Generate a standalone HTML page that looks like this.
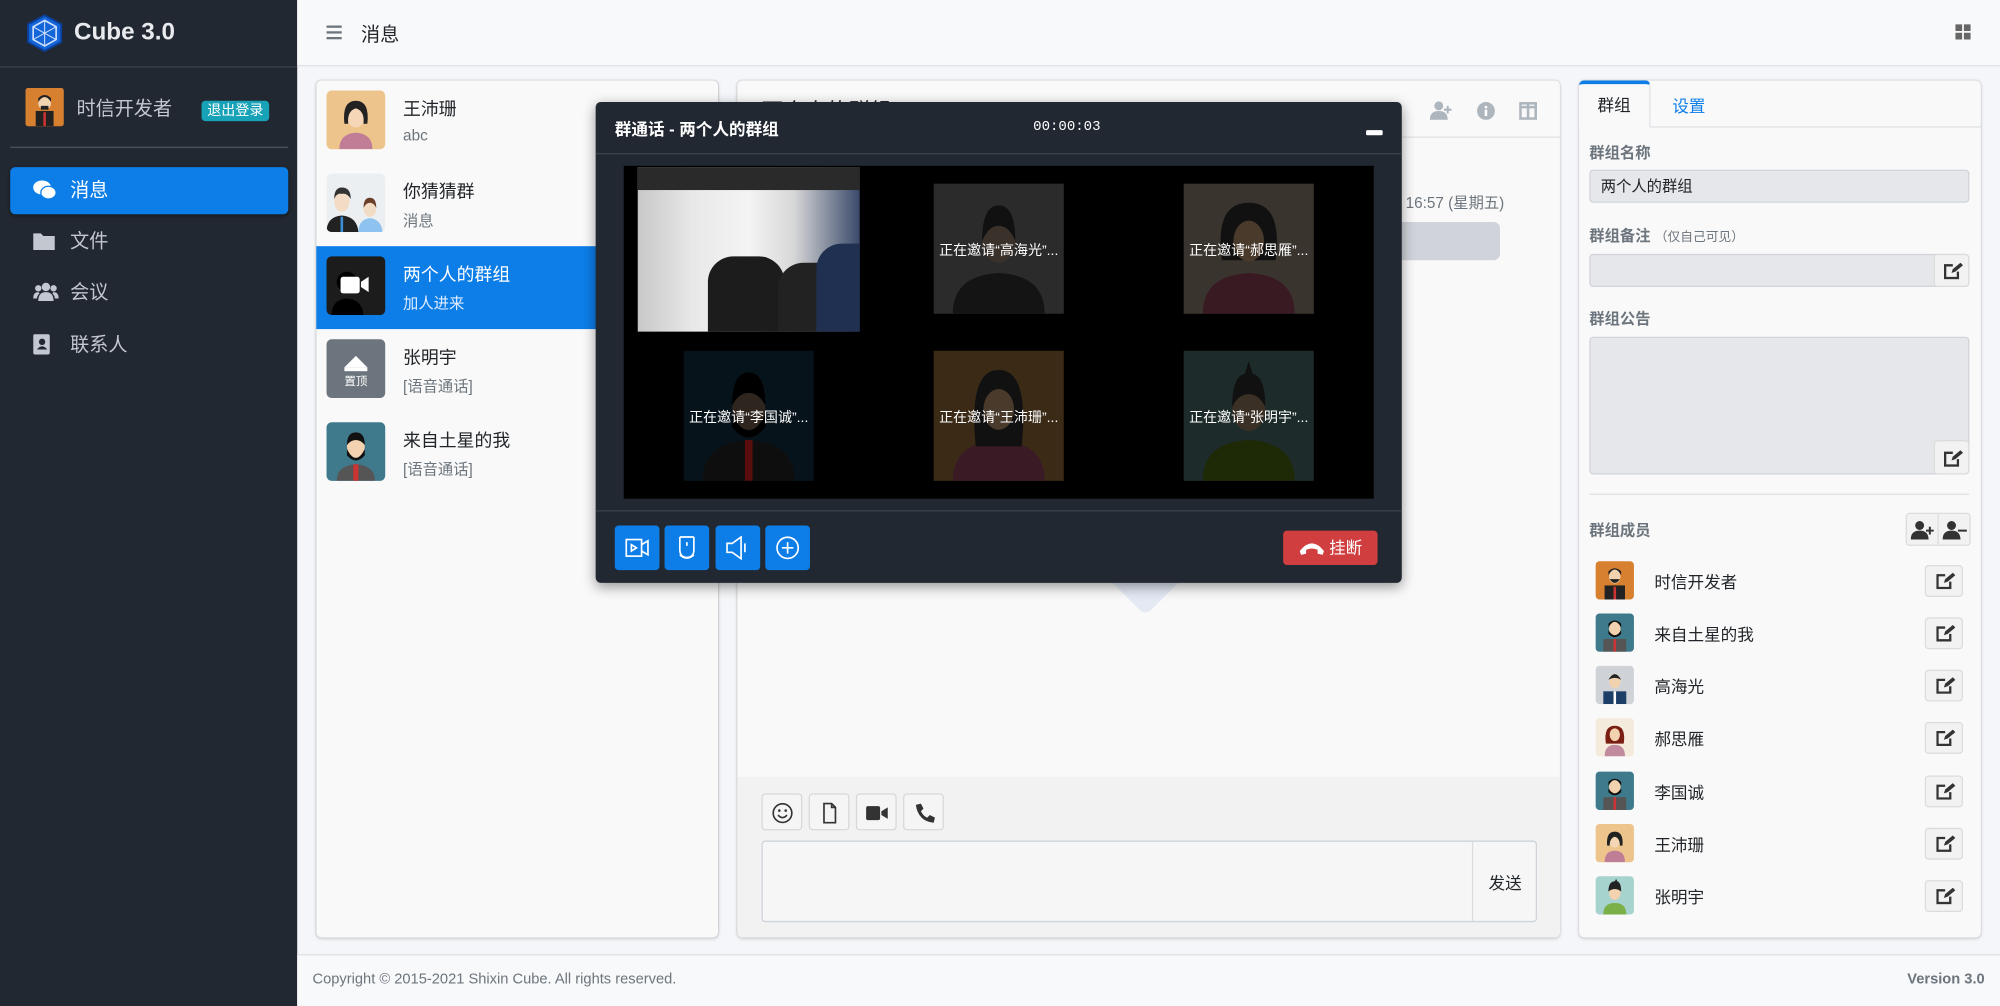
<!DOCTYPE html>
<html><head><meta charset="utf-8"><style>
*{box-sizing:border-box;margin:0;padding:0}
html,body{width:2000px;height:1006px;overflow:hidden;background:#f8f9fa}
body{font-family:"Liberation Sans","Noto Sans CJK SC",sans-serif;color:#212529}
#w{position:absolute;left:0;top:0;width:1568px;height:789px;transform:scale(1.27551);transform-origin:0 0;background:#f4f6f9}
.a{position:absolute}
.sb{left:0;top:0;width:233px;height:789px;background:#222831}
.nav{position:absolute;left:8px;width:218px;height:37px;border-radius:4px;color:#c2c7d0;font-size:15px;line-height:37px;padding-left:47px}
.nav.on{background:#0d7ee8;color:#fff;box-shadow:0 1px 3px rgba(0,0,0,.4)}
.nav svg{position:absolute;left:18px;top:10px}
.card{background:#f9f9f9;border-radius:4px;box-shadow:0 0 1px rgba(0,0,0,.2),0 1px 3px rgba(0,0,0,.15)}
.it{position:absolute;left:0;width:315px;height:65px}
.it .av{position:absolute;left:8px;top:8px;width:46px;height:46px;border-radius:4px;overflow:hidden}
.it .n{position:absolute;left:68px;top:12px;font-size:14px}
.it .s{position:absolute;left:68px;top:36px;font-size:12px;color:#6c757d}
.lbl{position:absolute;left:8px;font-size:12px;font-weight:bold;color:#6c757d}
.inp{position:absolute;left:8px;width:298px;background:#e5e7ea;border:1px solid #d0d4d9;border-radius:3px}
.eb{position:absolute;width:29px;height:26px;background:#f2f2f2;border:1px solid #dcdcdc;border-radius:3px}
.mem{position:absolute;left:13px;width:290px;height:30px}
.mem .av{position:absolute;left:0;top:0;width:30px;height:30px;border-radius:3px;overflow:hidden}
.mem .n{position:absolute;left:46px;top:6px;font-size:13px}
.mem .eb{left:258px;top:3px;width:30px;height:25px}
.mem .eb svg{position:absolute;left:8px;top:5px}
.tile{position:absolute;width:102px;height:102px;overflow:hidden}
.tile span{position:absolute;left:0;right:0;top:44px;text-align:center;color:#fff;font-size:11px;white-space:nowrap}
.mb{position:absolute;top:332px;width:35px;height:35px;background:#0d7ee8;border-radius:3px}
.mb svg{position:absolute;left:8px;top:8px}
.tb{position:absolute;top:13px;width:32px;height:29px;background:#f5f5f5;border:1px solid #d8d8d8;border-radius:3px}
.tb svg{position:absolute;left:7px;top:6px}
</style></head><body><div id="w">

<svg width="0" height="0" style="position:absolute"><defs><g id="ed"><path d="M7 2 H1 V12 H11 V7" fill="none" stroke="#333" stroke-width="1.8"/><path d="M6 8 l1-3 l6-5 l2 2 l-6 5z" fill="#333"/></g></defs></svg>

<!-- sidebar -->
<div class="a sb">
 <svg class="a" style="left:21px;top:11px" width="28" height="30" viewBox="0 0 28 30"><polygon points="14,1 27,8 27,22 14,29 1,22 1,8" fill="#1466d8" stroke="#0b3f99" stroke-width="1.5"/><polygon points="14,5 23,10 23,20 14,25 5,20 5,10" fill="none" stroke="#cfe0ff" stroke-width="1.3"/><path d="M14 5 L14 25 M5 10 L23 20 M23 10 L5 20" stroke="#cfe0ff" stroke-width="0.8"/></svg>
 <div class="a" style="left:58px;top:15px;font-size:19px;font-weight:bold;color:#e8eaed">Cube 3.0</div>
 <div class="a" style="left:0;top:52px;width:233px;height:1px;background:#3a4047"></div>
 <div class="a" style="left:20px;top:69px;width:30px;height:30px;background:#d7802f;border-radius:2px;overflow:hidden"><svg width="30" height="30"><rect x="8" y="18" width="14" height="12" fill="#222"/><rect x="14" y="19" width="2" height="11" fill="#c33"/><circle cx="15" cy="12" r="5" fill="#f3d2b0"/><path d="M10 11 q5 -8 10 0 v-3 q-5 -5 -10 0z" fill="#222"/><rect x="12" y="14" width="6" height="3" fill="#222"/></svg></div>
 <div class="a" style="left:60px;top:74px;font-size:15px;color:#c2c7d0">时信开发者</div>
 <div class="a" style="left:158px;top:79px;width:53px;height:16px;background:#17a2b8;border-radius:3px;color:#fff;font-size:11px;line-height:16px;text-align:center">退出登录</div>
 <div class="a" style="left:8px;top:115px;width:218px;height:1px;background:#4b545c"></div>
 <div class="nav on" style="top:131px"><svg width="18" height="16" viewBox="0 0 18 16"><ellipse cx="7" cy="6" rx="7" ry="5.5" fill="#fff"/><ellipse cx="12" cy="10" rx="6" ry="5" fill="#fff" stroke="#0d7ee8" stroke-width="1"/></svg>消息</div>
 <div class="nav" style="top:171px"><svg width="17" height="15" viewBox="0 0 17 15"><path d="M0 2 h6 l2 2 h9 v11 h-17z" fill="#c2c7d0"/></svg>文件</div>
 <div class="nav" style="top:211px"><svg width="20" height="15" viewBox="0 0 20 15"><circle cx="10" cy="4" r="3.3" fill="#c2c7d0"/><circle cx="4" cy="5" r="2.5" fill="#c2c7d0"/><circle cx="16" cy="5" r="2.5" fill="#c2c7d0"/><path d="M4 15 q0-7 6-7 q6 0 6 7z M0 13 q0-5 4-5 l1 1 q-2 2-2 4z M20 13 q0-5-4-5 l-1 1 q2 2 2 4z" fill="#c2c7d0"/></svg>会议</div>
 <div class="nav" style="top:252px"><svg width="14" height="16" viewBox="0 0 14 16"><rect x="0" y="0" width="13" height="16" rx="1.5" fill="#c2c7d0"/><circle cx="7" cy="6" r="2.5" fill="#222831"/><path d="M3 12 q4-5 8 0z" fill="#222831"/></svg>联系人</div>
</div>

<!-- top bar -->
<div class="a" style="left:233px;top:0;width:1335px;height:52px;background:#f8f9fa;border-bottom:1px solid #dee2e6"></div>
<svg class="a" style="left:256px;top:20px" width="12" height="11"><rect y="0" width="12" height="1.8" fill="#6c757d"/><rect y="4.5" width="12" height="1.8" fill="#6c757d"/><rect y="9" width="12" height="1.8" fill="#6c757d"/></svg>
<div class="a" style="left:283px;top:16px;font-size:15px">消息</div>
<svg class="a" style="left:1533px;top:19px" width="12" height="12"><rect width="5.3" height="5.3" fill="#666"/><rect x="6.7" width="5.3" height="5.3" fill="#666"/><rect y="6.7" width="5.3" height="5.3" fill="#666"/><rect x="6.7" y="6.7" width="5.3" height="5.3" fill="#666"/></svg>

<!-- footer -->
<div class="a" style="left:233px;top:748px;width:1335px;height:41px;background:#f8f9fa;border-top:1px solid #dee2e6"></div>
<div class="a" style="left:245px;top:762px;font-size:11.5px;color:#6c757d">Copyright © 2015-2021 Shixin Cube. All rights reserved.</div>
<div class="a" style="left:1470px;top:762px;width:86px;text-align:right;font-size:11.5px;font-weight:bold;color:#6c757d">Version 3.0</div>

<!-- conversation list -->
<div class="a card" style="left:248px;top:63px;width:315px;height:672px">
 <div class="it" style="top:0"><div class="av" style="background:#eec48d"><svg width="46" height="46"><path d="M10 46 q0-12 13-13 q13 1 13 13z" fill="#c07d96"/><ellipse cx="23" cy="20" rx="7" ry="9" fill="#f5d6b6"/><path d="M14 26 q-2-18 9-18 q11 0 9 18 l-3 0 q1-10-6-12 q-7 2-6 12z" fill="#222"/></svg></div><div class="n">王沛珊</div><div class="s">abc</div></div>
 <div class="it" style="top:65px"><div class="av" style="background:#eceff2"><svg width="46" height="46"><path d="M0 46 q0-12 12-13 q12 1 13 13z" fill="#222"/><rect x="11" y="34" width="2" height="12" fill="#3a8fd8"/><ellipse cx="12" cy="22" rx="6" ry="8" fill="#f3dcc6"/><path d="M6 20 q0-9 6-9 q7 0 7 9 q-3-5-7-4 q-4-1-6 4z" fill="#333"/><path d="M25 46 q0-10 9-11 q9 1 10 11z" fill="#8ec3ef"/><ellipse cx="34" cy="28" rx="5" ry="6" fill="#f3dcc6"/><path d="M29 27 q0-8 5-8 q5 0 5 8 q-2-4-5-4 q-3 0-5 4z" fill="#6b3f2a"/></svg></div><div class="n">你猜猜群</div><div class="s">消息</div></div>
 <div class="it" style="top:130px;background:#0d7ee8"><div class="av" style="background:#1c1c1c"><svg width="46" height="46"><path d="M4 46 q0-12 12-13 q12 1 13 13z" fill="#000"/><circle cx="16" cy="20" r="8" fill="#000"/><rect x="11" y="16" width="15" height="13" rx="2" fill="#fff"/><path d="M27 20 l6-4 v12 l-6-4z" fill="#fff"/></svg></div><div class="n" style="color:#fff">两个人的群组</div><div class="s" style="color:#e0ecff">加人进来</div></div>
 <div class="it" style="top:195px"><div class="av" style="background:#6c757d"><svg width="46" height="46"><path d="M23 13 l9 9 h-18z" fill="#fff"/><rect x="14" y="22" width="18" height="3" fill="#fff"/><text x="23" y="36" font-size="9" fill="#fff" text-anchor="middle" font-family="Noto Sans CJK SC">置顶</text></svg></div><div class="n">张明宇</div><div class="s">[语音通话]</div></div>
 <div class="it" style="top:260px"><div class="av" style="background:#3f7a8c"><svg width="46" height="46"><path d="M8 46 q0-12 15-13 q15 1 15 13z" fill="#555"/><rect x="21" y="33" width="4" height="13" fill="#c33"/><ellipse cx="23" cy="19" rx="7" ry="9" fill="#f3d2b0"/><path d="M16 18 q0-10 7-10 q7 0 7 10 q-3-4-7-4 q-4 0-7 4z M16 21 q7 14 14 0 v5 q-7 8-14 0z" fill="#111"/></svg></div><div class="n">来自土星的我</div><div class="s">[语音通话]</div></div>
</div>

<!-- chat panel -->
<div class="a card" style="left:578px;top:63px;width:645px;height:672px;overflow:hidden">
 <div class="a" style="left:19px;top:10px;font-size:17px">两个人的群组</div>
 <div class="a" style="left:0;top:44px;width:645px;height:1px;background:#dee2e6"></div>
 <svg class="a" style="left:543px;top:16px" width="18" height="15"><circle cx="7" cy="4" r="3.5" fill="#adb5bd"/><path d="M0 15 q0-7 7-7 q7 0 7 7z" fill="#adb5bd"/><path d="M14 4 v6 M11 7 h6" stroke="#adb5bd" stroke-width="1.6"/></svg>
 <svg class="a" style="left:580px;top:17px" width="14" height="14"><circle cx="7" cy="7" r="7" fill="#adb5bd"/><rect x="6" y="6" width="2" height="5" fill="#fff"/><circle cx="7" cy="4" r="1.1" fill="#fff"/></svg>
 <svg class="a" style="left:613px;top:17px" width="14" height="14"><rect x="1" y="1" width="12" height="12" fill="none" stroke="#adb5bd" stroke-width="2"/><path d="M7 1 v12 M1 4 h12" stroke="#adb5bd" stroke-width="2"/></svg>
 <div class="a" style="left:524px;top:87px;font-size:12px;color:#6c757d">16:57 (星期五)</div>
 <div class="a" style="left:440px;top:111px;width:158px;height:30px;background:#d0d4da;border-radius:5px"></div>
 <div class="a" style="left:270px;top:299px;width:100px;height:100px;background:#e4e9f4;transform:rotate(45deg);border-radius:6px"></div>
 <div class="a" style="left:0;top:546px;width:645px;height:126px;background:#f2f2f2"></div>
 <div class="tb" style="left:19px;top:559px"><svg width="17" height="17"><circle cx="8.5" cy="8.5" r="7.3" fill="none" stroke="#333" stroke-width="1.3"/><circle cx="6" cy="6.5" r="1" fill="#333"/><circle cx="11" cy="6.5" r="1" fill="#333"/><path d="M5 10 q3.5 4 7 0" fill="none" stroke="#333" stroke-width="1.3"/></svg></div>
 <div class="tb" style="left:56px;top:559px"><svg width="17" height="17"><path d="M4 1 h6 l3 3 v12 h-9z M10 1 v3 h3" fill="none" stroke="#333" stroke-width="1.3"/></svg></div>
 <div class="tb" style="left:93px;top:559px"><svg width="18" height="17"><rect x="0" y="3" width="11" height="11" rx="1.5" fill="#333"/><path d="M12 7 l5-3 v9 l-5-3z" fill="#333"/></svg></div>
 <div class="tb" style="left:130px;top:559px"><svg width="17" height="17"><path d="M2 2 l4-1 l2 4 l-2 2 q2 4 5 5 l2-2 l4 2 l-1 4 q-12-1-14-14z" fill="#333"/></svg></div>
 <div class="a" style="left:19px;top:596px;width:608px;height:64px;background:#f6f6f6;border:1px solid #ced4da;border-radius:3px"></div>
 <div class="a" style="left:576px;top:597px;width:1px;height:62px;background:#dcdcdc"></div>
 <div class="a" style="left:589px;top:619px;font-size:13px">发送</div>
</div>

<!-- right panel -->
<div class="a card" style="left:1238px;top:63px;width:315px;height:672px">
 <div class="a" style="left:0;top:36px;width:315px;height:1px;background:#dee2e6"></div>
 <div class="a" style="left:0;top:0;width:56px;height:37px;background:#f9f9f9;border-top:3px solid #0d7ee8;border-right:1px solid #dee2e6;border-radius:4px 4px 0 0;font-size:13px;text-align:center;line-height:33px">群组</div>
 <div class="a" style="left:73px;top:10px;font-size:13px;color:#0d7ee8">设置</div>
 <div class="lbl" style="top:48px">群组名称</div>
 <div class="inp" style="top:70px;height:26px;font-size:12px;line-height:24px;padding-left:8px">两个人的群组</div>
 <div class="lbl" style="top:113px">群组备注 <span style="font-size:10px;font-weight:normal">（仅自己可见）</span></div>
 <div class="inp" style="top:136px;height:26px"></div>
 <div class="eb" style="left:278px;top:136px;height:26px;width:28px"><svg class="a" style="left:7px;top:6px" width="15" height="13"><use href="#ed"/></svg></div>
 <div class="lbl" style="top:178px">群组公告</div>
 <div class="inp" style="top:201px;height:108px"></div>
 <div class="eb" style="left:278px;top:282px;height:27px;width:28px"><svg class="a" style="left:7px;top:7px" width="15" height="13"><use href="#ed"/></svg></div>
 <div class="a" style="left:8px;top:324px;width:298px;height:1px;background:#dee2e6"></div>
 <div class="lbl" style="top:344px">群组成员</div>
 <div class="eb" style="left:256px;top:339px;width:51px;height:26px"><div class="a" style="left:24px;top:0;width:1px;height:24px;background:#dcdcdc"></div>
  <svg class="a" style="left:3px;top:5px" width="20" height="15"><circle cx="7" cy="4" r="3.5" fill="#333"/><path d="M0 15 q0-7 7-7 q7 0 7 7z" fill="#333"/><path d="M15 5 v6 M12 8 h6" stroke="#333" stroke-width="1.6"/></svg>
  <svg class="a" style="left:28px;top:5px" width="20" height="15"><circle cx="7" cy="4" r="3.5" fill="#333"/><path d="M0 15 q0-7 7-7 q7 0 7 7z" fill="#333"/><path d="M12 8 h7" stroke="#333" stroke-width="1.6"/></svg></div>

 <div class="mem" style="top:377px"><div class="av" style="background:#d7802f"><svg width="30" height="30"><rect x="7" y="19" width="16" height="11" fill="#222"/><rect x="14" y="20" width="2" height="10" fill="#c33"/><ellipse cx="15" cy="12" rx="4.5" ry="5.5" fill="#f3d2b0"/><path d="M10 11 q5-9 10 0 v-3 q-5-5-10 0z M11 14 q4 6 8 0z" fill="#222"/></svg></div><div class="n">时信开发者</div><div class="eb"><svg width="15" height="13"><use href="#ed"/></svg></div></div>
 <div class="mem" style="top:418px"><div class="av" style="background:#3f7a8c"><svg width="30" height="30"><rect x="6" y="20" width="18" height="10" fill="#555"/><rect x="14" y="20" width="2" height="10" fill="#c33"/><ellipse cx="15" cy="12" rx="4.5" ry="5.5" fill="#f3d2b0"/><path d="M10 11 q5-9 10 0 v-3 q-5-5-10 0z M10 13 q5 8 10 0 v3 q-5 5-10 0z" fill="#111"/></svg></div><div class="n">来自土星的我</div><div class="eb"><svg width="15" height="13"><use href="#ed"/></svg></div></div>
 <div class="mem" style="top:459px"><div class="av" style="background:#cfd3d8"><svg width="30" height="30"><rect x="6" y="20" width="18" height="10" fill="#1d3e66"/><rect x="14" y="20" width="2" height="10" fill="#fff"/><ellipse cx="15" cy="12" rx="4.5" ry="5.5" fill="#f3d2b0"/><path d="M10 11 q5-9 10 0 q-5-3-10 0z" fill="#222"/></svg></div><div class="n">高海光</div><div class="eb"><svg width="15" height="13"><use href="#ed"/></svg></div></div>
 <div class="mem" style="top:500px"><div class="av" style="background:#f4ebdd"><svg width="30" height="30"><path d="M7 30 q0-9 8-9 q8 0 8 9z" fill="#c28a9e"/><path d="M8 20 q-2-14 7-14 q9 0 7 14z" fill="#7a1d12"/><ellipse cx="15" cy="13" rx="4" ry="5" fill="#f3d2b0"/></svg></div><div class="n">郝思雁</div><div class="eb"><svg width="15" height="13"><use href="#ed"/></svg></div></div>
 <div class="mem" style="top:542px"><div class="av" style="background:#3f7a8c"><svg width="30" height="30"><rect x="6" y="20" width="18" height="10" fill="#555"/><rect x="14" y="20" width="2" height="10" fill="#c33"/><ellipse cx="15" cy="12" rx="4.5" ry="5.5" fill="#f3d2b0"/><path d="M10 11 q5-9 10 0 v-3 q-5-5-10 0z M10 13 q5 8 10 0 v3 q-5 5-10 0z" fill="#111"/></svg></div><div class="n">李国诚</div><div class="eb"><svg width="15" height="13"><use href="#ed"/></svg></div></div>
 <div class="mem" style="top:583px"><div class="av" style="background:#eec48d"><svg width="30" height="30"><path d="M7 30 q0-9 8-9 q8 0 8 9z" fill="#c07d96"/><ellipse cx="15" cy="13" rx="4.5" ry="5.5" fill="#f5d6b6"/><path d="M9 17 q-1-11 6-11 q7 0 6 11 l-2 0 q0-6-4-7 q-4 1-4 7z" fill="#222"/></svg></div><div class="n">王沛珊</div><div class="eb"><svg width="15" height="13"><use href="#ed"/></svg></div></div>
 <div class="mem" style="top:624px"><div class="av" style="background:#a7d3cf"><svg width="30" height="30"><path d="M6 30 q0-9 9-9 q9 0 9 9z" fill="#7bb048"/><ellipse cx="15" cy="13" rx="4.5" ry="5.5" fill="#f3d2b0"/><path d="M10 12 q0-8 5-8 l1-2 l1 2 q3 1 3 8 q-5-4-10 0z" fill="#222"/></svg></div><div class="n">张明宇</div><div class="eb"><svg width="15" height="13"><use href="#ed"/></svg></div></div>
</div>

<!-- call modal -->
<div class="a" style="left:467px;top:80px;width:632px;height:377px;background:#222831;border-radius:4px;box-shadow:0 3px 10px rgba(0,0,0,.4)">
 <div class="a" style="left:15px;top:11px;font-size:13px;font-weight:bold;color:#fff">群通话 - 两个人的群组</div>
 <div class="a" style="left:343px;top:14px;font-size:11px;color:#fff;font-family:'Liberation Mono','DejaVu Sans Mono',monospace">00:00:03</div>
 <div class="a" style="left:604px;top:22px;width:13px;height:4px;background:#fff;border-radius:1px"></div>
 <div class="a" style="left:0;top:40px;width:632px;height:1px;background:#3b424b"></div>
 <div class="a" style="left:22px;top:50px;width:588px;height:261px;background:#000">
  <div class="a" style="left:11px;top:1px;width:174px;height:129px;background:linear-gradient(90deg,#c8c8c8 0%,#e8e8e8 25%,#f4f4f4 50%,#d8d8d8 70%,#3a4a6a 100%)">
   <div class="a" style="left:0;top:0;width:174px;height:18px;background:#2a2a2a"></div>
   <div class="a" style="left:55px;top:70px;width:60px;height:59px;background:#1c1c1c;border-radius:20px 20px 0 0"></div>
   <div class="a" style="left:110px;top:75px;width:55px;height:54px;background:#222;border-radius:20px 20px 0 0"></div>
   <div class="a" style="left:140px;top:60px;width:34px;height:69px;background:#203050;border-radius:20px 0 0 0"></div>
  </div>
  <div class="tile" style="left:243px;top:14px;background:#2b2b2b"><svg width="102" height="102"><path d="M15 102 q0-30 36-32 q36 2 36 32z" fill="#141414"/><ellipse cx="51" cy="45" rx="13" ry="17" fill="#3a322a"/><path d="M38 45 q0-28 13-28 q13 0 13 28 q-5-12-13-12 q-8 0-13 12z" fill="#111"/></svg><span>正在邀请“高海光”...</span></div>
  <div class="tile" style="left:439px;top:14px;background:#3a342e"><svg width="102" height="102"><path d="M15 102 q0-30 36-32 q36 2 36 32z" fill="#3a1a22"/><path d="M30 60 q-6-45 21-45 q27 0 21 45z" fill="#111"/><ellipse cx="51" cy="45" rx="12" ry="16" fill="#4a3a2c"/></svg><span>正在邀请“郝思雁”...</span></div>
  <div class="tile" style="left:47px;top:145px;background:#07131b"><svg width="102" height="102"><path d="M15 102 q0-30 36-32 q36 2 36 32z" fill="#0e0e0e"/><rect x="48" y="70" width="6" height="32" fill="#5a0d0d"/><ellipse cx="51" cy="45" rx="13" ry="17" fill="#2e261e"/><path d="M38 43 q0-26 13-26 q13 0 13 26 q-5-10-13-10 q-8 0-13 10z M38 50 q13 25 26 0 v10 q-13 16-26 0z" fill="#000"/></svg><span>正在邀请“李国诚”...</span></div>
  <div class="tile" style="left:243px;top:145px;background:#3a2a16"><svg width="102" height="102"><path d="M15 102 q0-30 36-32 q36 2 36 32z" fill="#3a1a24"/><path d="M33 75 q-6-60 18-60 q24 0 18 60z" fill="#111"/><ellipse cx="51" cy="46" rx="12" ry="16" fill="#4a3a2c"/></svg><span>正在邀请“王沛珊”...</span></div>
  <div class="tile" style="left:439px;top:145px;background:#1e2b2b"><svg width="102" height="102"><path d="M15 102 q0-30 36-32 q36 2 36 32z" fill="#1e2a05"/><ellipse cx="51" cy="46" rx="13" ry="17" fill="#3a3026"/><path d="M38 44 q0-24 10-26 l3-10 l3 10 q10 2 10 26 q-5-10-13-10 q-8 0-13 10z" fill="#111"/></svg><span>正在邀请“张明宇”...</span></div>
 </div>
 <div class="a" style="left:0;top:320px;width:632px;height:1px;background:#3b424b"></div>
 <div class="mb" style="left:15px"><svg width="19" height="19" viewBox="0 0 19 19" fill="none" stroke="#fff" stroke-width="1.3"><rect x="1" y="3" width="12" height="13"/><path d="M13 7 l5-3 v11 l-5-3 M5 7 l4 2.5 l-4 2.5z"/></svg></div>
 <div class="mb" style="left:54px"><svg width="19" height="19" viewBox="0 0 19 19" fill="none" stroke="#fff" stroke-width="1.3"><path d="M4 1 v10 q0 6 5.5 6 q5.5 0 5.5-6 v-10 M4 1 h11 M9.5 5 v3 M4 15 q5.5 5 11 0"/></svg></div>
 <div class="mb" style="left:94px"><svg width="19" height="19" viewBox="0 0 19 19" fill="none" stroke="#fff" stroke-width="1.3"><path d="M1 6 h4 l7-5 v17 l-7-5 h-4z M15 6 v7"/></svg></div>
 <div class="mb" style="left:133px"><svg width="19" height="19" viewBox="0 0 19 19" fill="none" stroke="#fff" stroke-width="1.3"><circle cx="9.5" cy="9.5" r="8.3"/><path d="M9.5 5 v9 M5 9.5 h9"/></svg></div>
 <div class="a" style="left:539px;top:336px;width:74px;height:27px;background:#d03e40;border-radius:3px;color:#fff;font-size:13px;line-height:27px;padding-left:36px"><svg class="a" style="left:12px;top:9px" width="21" height="10" viewBox="0 0 21 10"><path d="M1 7 q9.5-12 19 0 l-1 3 l-4-1 v-3 q-4.5-2-9 0 v3 l-4 1z" fill="#fff"/></svg>挂断</div>
</div>

</div></body></html>
